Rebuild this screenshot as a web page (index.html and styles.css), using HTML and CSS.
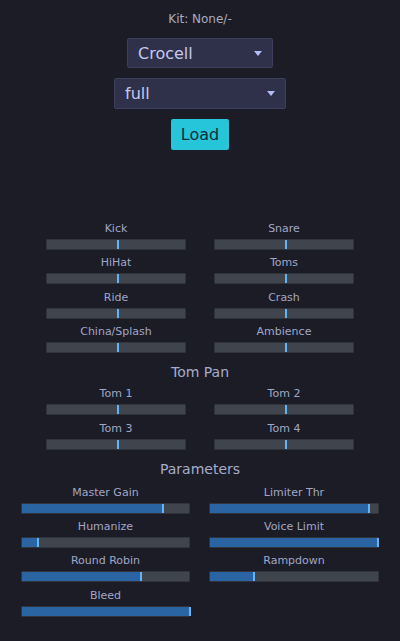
FILE: index.html
```html
<!DOCTYPE html>
<html>
<head>
<meta charset="utf-8">
<link rel="stylesheet" href="styles.css">
</head>
<body>
<div class="app">
  <div class="kit">Kit: None/-</div>
  <div class="select sel-kit"><span>Crocell</span><span class="arrow"></span></div>
  <div class="select sel-mic"><span>full</span><span class="arrow"></span></div>
  <button class="load">Load</button>

  <div class="grid mix">
    <div class="item"><div class="label">Kick</div><div class="track"><div class="thumb" style="left:70px"></div></div></div>
    <div class="item"><div class="label">Snare</div><div class="track"><div class="thumb" style="left:70px"></div></div></div>
    <div class="item"><div class="label">HiHat</div><div class="track"><div class="thumb" style="left:70px"></div></div></div>
    <div class="item"><div class="label">Toms</div><div class="track"><div class="thumb" style="left:70px"></div></div></div>
    <div class="item"><div class="label">Ride</div><div class="track"><div class="thumb" style="left:70px"></div></div></div>
    <div class="item"><div class="label">Crash</div><div class="track"><div class="thumb" style="left:70px"></div></div></div>
    <div class="item"><div class="label">China/Splash</div><div class="track"><div class="thumb" style="left:70px"></div></div></div>
    <div class="item"><div class="label">Ambience</div><div class="track"><div class="thumb" style="left:70px"></div></div></div>
  </div>

  <div class="heading">Tom Pan</div>
  <div class="grid mix">
    <div class="item"><div class="label">Tom 1</div><div class="track"><div class="thumb" style="left:70px"></div></div></div>
    <div class="item"><div class="label">Tom 2</div><div class="track"><div class="thumb" style="left:70px"></div></div></div>
    <div class="item"><div class="label">Tom 3</div><div class="track"><div class="thumb" style="left:70px"></div></div></div>
    <div class="item"><div class="label">Tom 4</div><div class="track"><div class="thumb" style="left:70px"></div></div></div>
  </div>

  <div class="heading params-h">Parameters</div>
  <div class="grid params">
    <div class="item"><div class="label">Master Gain</div><div class="track"><div class="fill" style="width:140px"></div><div class="thumb" style="left:140px"></div></div></div>
    <div class="item"><div class="label">Limiter Thr</div><div class="track"><div class="fill" style="width:158px"></div><div class="thumb" style="left:158px"></div></div></div>
    <div class="item"><div class="label">Humanize</div><div class="track"><div class="fill" style="width:15px"></div><div class="thumb" style="left:15px"></div></div></div>
    <div class="item"><div class="label">Voice Limit</div><div class="track"><div class="fill" style="width:167px"></div><div class="thumb" style="left:167px"></div></div></div>
    <div class="item"><div class="label">Round Robin</div><div class="track"><div class="fill" style="width:118px"></div><div class="thumb" style="left:118px"></div></div></div>
    <div class="item"><div class="label">Rampdown</div><div class="track"><div class="fill" style="width:43px"></div><div class="thumb" style="left:43px"></div></div></div>
    <div class="item"><div class="label">Bleed</div><div class="track"><div class="fill" style="width:167px"></div><div class="thumb" style="left:167px"></div></div></div>
  </div>
</div>
</body>
</html>
```
FILE: styles.css
```css
html, body {
  margin: 0;
  padding: 0;
  background: #1c1c27;
  height: 100%;
}
body {
  font-family: "DejaVu Sans", sans-serif;
  color: #a6accb;
}
.app {
  display: flex;
  flex-direction: column;
  align-items: center;
  padding-top: 12px;
}
.kit {
  font-size: 12px;
  line-height: 14px;
  color: #a9adbf;
}
.select {
  box-sizing: border-box;
  height: 30px;
  margin-top: 12px;
  display: flex;
  align-items: center;
  justify-content: space-between;
  padding: 0 10px 0 10px;
  background: #2f3049;
  border: 1px solid #3d3f5b;
  border-radius: 2px;
  color: #c3c9f0;
  font-size: 16px;
}
.sel-kit { width: 146px; }
.sel-mic { width: 172px; height: 31px; margin-top: 10px; }
.arrow {
  width: 0;
  height: 0;
  border-left: 4.5px solid transparent;
  border-right: 4.5px solid transparent;
  border-top: 5px solid #b3bdf5;
}
.load {
  margin-top: 10px;
  width: 58px;
  height: 31px;
  background: #27c5da;
  border: none;
  border-radius: 2px;
  font-family: "DejaVu Sans", sans-serif;
  font-size: 16px;
  color: #0f2f3a;
  padding: 0;
}
.grid {
  display: grid;
  row-gap: 6.4px;
}
.mix {
  grid-template-columns: 140px 140px;
  column-gap: 28px;
  margin-top: 72px;
}
.heading + .mix { margin-top: 5px; }
.params {
  grid-template-columns: 169px 170px;
  column-gap: 19px;
  margin-top: 7px;
}
.heading {
  font-size: 14px;
  line-height: 20px;
  margin-top: 9px;
  color: #a6accb;
}
.item {
  display: flex;
  flex-direction: column;
  align-items: center;
}
.label {
  font-size: 11px;
  line-height: 14px;
  margin-bottom: 3px;
  color: #a0a7c6;
}
.track {
  position: relative;
  box-sizing: border-box;
  width: 100%;
  height: 11px;
  background: #40454d;
  border: 1px solid #30343b;
  border-radius: 1px;
}
.fill {
  height: 100%;
  background: #2a64a3;
}
.thumb {
  position: absolute;
  top: 0;
  bottom: 0;
  width: 2px;
  background: #64b5f6;
}
```
